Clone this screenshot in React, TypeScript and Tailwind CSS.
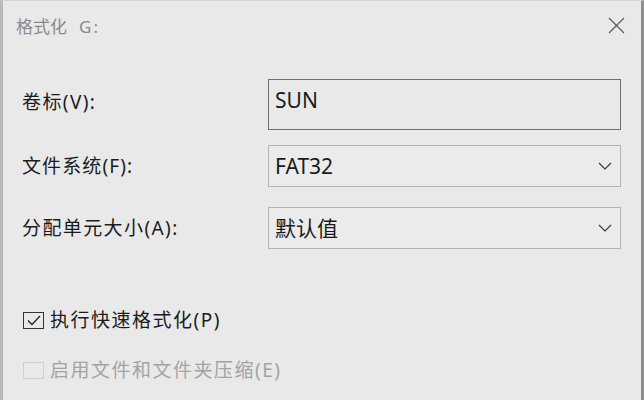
import React from "react";

function Chevron() {
  return (
    <svg width="14" height="8" viewBox="0 0 14 8" fill="none">
      <path d="M1 1 L7 7 L13 1" stroke="#3a3a3a" strokeWidth="1.2" />
    </svg>
  );
}

function Select({ value }: { value: string }) {
  return (
    <div className="w-[353px] h-[42px] border border-[#b4b4b4] bg-[#ebebeb] flex items-center justify-between pl-[6px] pr-[8px]">
      <span className="text-[21px] text-[#1a1a1a] leading-none">{value}</span>
      <Chevron />
    </div>
  );
}

export default function App() {
  return (
    <div className="w-[644px] h-[400px] bg-[#e9e9e9] border-l-[3px] border-l-[#b9b9bd] border-t border-t-[#d4d4d4] border-r-[3px] border-r-[#8e8e8e] flex flex-col font-['Noto_Sans','Noto_Sans_CJK_SC',sans-serif] overflow-hidden">
      <div className="h-[52px] flex items-center justify-between pl-[13px] pr-[16px]">
        <span className="text-[17px] text-[#8a8a8a]">
          格式化<span className="ml-[12px] tracking-[2px]">G:</span>
        </span>
        <svg width="17" height="17" viewBox="0 0 17 17" fill="none" className="-mt-[3px]">
          <path d="M1 1 L16 16 M16 1 L1 16" stroke="#555" strokeWidth="1.1" />
        </svg>
      </div>
      <div className="pl-[19px] flex flex-col">
        <div className="mt-[26px] flex items-start">
          <div className="w-[246px] mt-[9px] h-[28px] flex items-center text-[19px] tracking-[1.4px] text-[#1c1c1c]">卷标(V):</div>
          <div className="w-[353px] h-[51px] border border-[#6e6e6e] pl-[6px] pt-[8px] text-[21px] text-[#1a1a1a] leading-[24px]">SUN</div>
        </div>
        <div className="mt-[15px] flex items-center">
          <div className="w-[246px] text-[19px] tracking-[1.1px] text-[#1c1c1c]">文件系统(F):</div>
          <Select value="FAT32" />
        </div>
        <div className="mt-[20px] flex items-center">
          <div className="w-[246px] text-[19px] tracking-[1.4px] text-[#1c1c1c]">分配单元大小(A):</div>
          <Select value="默认值" />
        </div>
        <div className="mt-[57px] h-[28px] flex items-center">
          <div className="w-[21px] h-[17px] ml-[1px] border border-[#333] flex items-center justify-center">
            <svg width="14" height="11" viewBox="0 0 14 11" fill="none">
              <path d="M1 5.5 L5 9.5 L13 1" stroke="#222" strokeWidth="1.3" />
            </svg>
          </div>
          <span className="ml-[6px] text-[19px] tracking-[1.5px] text-[#1c1c1c]">执行快速格式化(P)</span>
        </div>
        <div className="mt-[22px] h-[28px] flex items-center">
          <div className="w-[21px] h-[17px] ml-[1px] border border-[#cfcfcf]" />
          <span className="ml-[6px] text-[19px] tracking-[1.5px] text-[#a3a3a3]">启用文件和文件夹压缩(E)</span>
        </div>
      </div>
    </div>
  );
}
